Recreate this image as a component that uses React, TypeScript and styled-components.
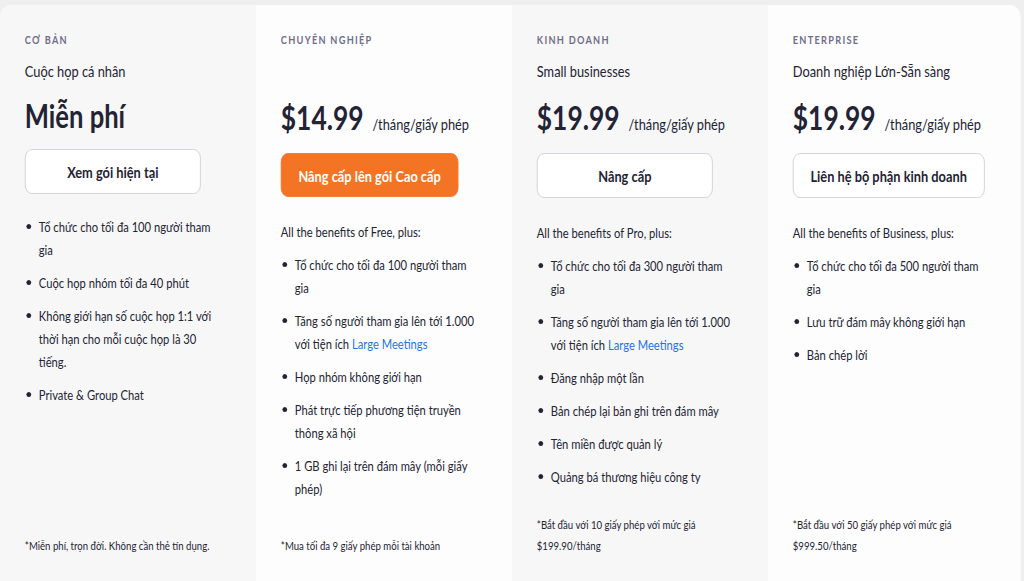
import React from "react";
import styled, { createGlobalStyle } from "styled-components";

const Global = createGlobalStyle`
  html, body { margin: 0; padding: 0; }
  body {
    background: #efeff0;
    font-family: Lato, "Noto Sans", sans-serif;
    color: #232333;
    -webkit-font-smoothing: antialiased;
  }
`;

/* The reference is a wide page shown horizontally compressed (to 80%):
   the layout is built at its natural 1280px width and squeezed to fit 1024px. */
const Page = styled.div`
  width: 1024px;
  height: 581px;
  overflow: hidden;
`;

const Stage = styled.div`
  width: 1280px;
  height: 581px;
  box-sizing: border-box;
  padding: 5px 4px 0 0;
  display: flex;
  flex-direction: column;
  transform: scaleX(0.8);
  transform-origin: 0 0;
`;

const Card = styled.div`
  flex: 1;
  display: grid;
  grid-template-columns: 320px 320px 320px 316px;
  border-radius: 13px 13px 0 0;
  overflow: hidden;
`;

const Column = styled.section<{ $shade: boolean }>`
  background: ${(p) => (p.$shade ? "#f7f7f8" : "#fdfdfd")};
  display: flex;
  flex-direction: column;
  padding: 27px 42px 25px 31px;
  min-width: 0;
`;

const Tier = styled.div`
  font-size: 11.5px;
  line-height: 16px;
  font-weight: 700;
  letter-spacing: 1.6px;
  color: #6f6e8a;
  text-transform: uppercase;
`;

const Subtitle = styled.div`
  margin-top: 12px;
  font-size: 16px;
  line-height: 22px;
  height: 22px;
  white-space: nowrap;
`;

const PriceRow = styled.div<{ $free: boolean }>`
  margin-top: ${(p) => (p.$free ? 14 : 15)}px;
  margin-bottom: ${(p) => (p.$free ? 13 : 16)}px;
  display: flex;
  align-items: baseline;
  gap: 11px;
  height: 40px;
  white-space: nowrap;
`;

const Amount = styled.span<{ $free: boolean }>`
  font-size: ${(p) => (p.$free ? 32 : 33)}px;
  line-height: 40px;
  font-weight: 700;
`;

const Unit = styled.span`
  font-size: 16px;
`;

const Button = styled.button<{ $primary: boolean }>`
  align-self: flex-start;
  height: ${(p) => (p.$primary ? 44 : 45)}px;
  min-width: 220px;
  padding: 0 21px;
  border-radius: 9px;
  font-family: inherit;
  font-size: 16px;
  font-weight: 700;
  white-space: nowrap;
  cursor: pointer;
  border: 1px solid ${(p) => (p.$primary ? "#f4772a" : "#cfcfd6")};
  background: ${(p) => (p.$primary ? "#f47426" : "#ffffff")};
  color: ${(p) => (p.$primary ? "#ffffff" : "#232333")};
`;

const Body = styled.div<{ $free: boolean }>`
  margin-top: ${(p) => (p.$free ? 21 : 24)}px;
  display: flex;
  flex-direction: column;
  flex: 1;
`;

const Intro = styled.div`
  font-size: 14px;
  line-height: 22px;
  margin-bottom: 10px;
`;

const List = styled.ul`
  list-style: none;
  margin: 0;
  padding: 0;
  display: flex;
  flex-direction: column;
  gap: 10px;
`;

const Item = styled.li`
  display: flex;
  gap: 10px;
  font-size: 14px;
  line-height: 23px;
`;

const Dot = styled.span`
  flex: none;
  width: 6px;
  height: 5px;
  border-radius: 50%;
  background: #232333;
  margin: 9px 0 0 1.5px;
`;

const Link = styled.a`
  color: #1f74e0;
  text-decoration: none;
`;

const Footnote = styled.p`
  margin: auto 0 0;
  font-size: 12px;
  line-height: 21px;
`;

type Plan = {
  tier: string;
  subtitle: string;
  amount: string;
  unit?: string;
  cta: string;
  primary?: boolean;
  intro?: string;
  items: React.ReactNode[];
  note: React.ReactNode;
};

const large = (
  <>
    Tăng số người tham gia lên tới 1.000 với tiện ích <Link href="#">Large Meetings</Link>
  </>
);

const plans: Plan[] = [
  {
    tier: "Cơ bản",
    subtitle: "Cuộc họp cá nhân",
    amount: "Miễn phí",
    cta: "Xem gói hiện tại",
    items: [
      "Tổ chức cho tối đa 100 người tham gia",
      "Cuộc họp nhóm tối đa 40 phút",
      "Không giới hạn số cuộc họp 1:1 với thời hạn cho mỗi cuộc họp là 30 tiếng.",
      "Private & Group Chat",
    ],
    note: "*Miễn phí, trọn đời. Không cần thẻ tín dụng.",
  },
  {
    tier: "Chuyên nghiệp",
    subtitle: "",
    amount: "$14.99",
    unit: "/tháng/giấy phép",
    cta: "Nâng cấp lên gói Cao cấp",
    primary: true,
    intro: "All the benefits of Free, plus:",
    items: [
      "Tổ chức cho tối đa 100 người tham gia",
      large,
      "Họp nhóm không giới hạn",
      "Phát trực tiếp phương tiện truyền thông xã hội",
      "1 GB ghi lại trên đám mây (mỗi giấy phép)",
    ],
    note: "*Mua tối đa 9 giấy phép mỗi tài khoản",
  },
  {
    tier: "Kinh doanh",
    subtitle: "Small businesses",
    amount: "$19.99",
    unit: "/tháng/giấy phép",
    cta: "Nâng cấp",
    intro: "All the benefits of Pro, plus:",
    items: [
      "Tổ chức cho tối đa 300 người tham gia",
      large,
      "Đăng nhập một lần",
      "Bản chép lại bản ghi trên đám mây",
      "Tên miền được quản lý",
      "Quảng bá thương hiệu công ty",
    ],
    note: (
      <>
        *Bắt đầu với 10 giấy phép với mức giá
        <br />
        $199.90/tháng
      </>
    ),
  },
  {
    tier: "Enterprise",
    subtitle: "Doanh nghiệp Lớn-Sẵn sàng",
    amount: "$19.99",
    unit: "/tháng/giấy phép",
    cta: "Liên hệ bộ phận kinh doanh",
    intro: "All the benefits of Business, plus:",
    items: [
      "Tổ chức cho tối đa 500 người tham gia",
      "Lưu trữ đám mây không giới hạn",
      "Bản chép lời",
    ],
    note: (
      <>
        *Bắt đầu với 50 giấy phép với mức giá
        <br />
        $999.50/tháng
      </>
    ),
  },
];

export default function App() {
  return (
    <>
      <Global />
      <Page>
        <Stage>
          <Card>
            {plans.map((p, i) => {
              const free = !p.unit;
              return (
                <Column key={p.tier} $shade={i % 2 === 0}>
                  <Tier>{p.tier}</Tier>
                  <Subtitle>{p.subtitle}</Subtitle>
                  <PriceRow $free={free}>
                    <Amount $free={free}>{p.amount}</Amount>
                    {p.unit && <Unit>{p.unit}</Unit>}
                  </PriceRow>
                  <Button $primary={!!p.primary}>{p.cta}</Button>
                  <Body $free={free}>
                    {p.intro && <Intro>{p.intro}</Intro>}
                    <List>
                      {p.items.map((it, j) => (
                        <Item key={j}>
                          <Dot />
                          <span>{it}</span>
                        </Item>
                      ))}
                    </List>
                    <Footnote>{p.note}</Footnote>
                  </Body>
                </Column>
              );
            })}
          </Card>
        </Stage>
      </Page>
    </>
  );
}
